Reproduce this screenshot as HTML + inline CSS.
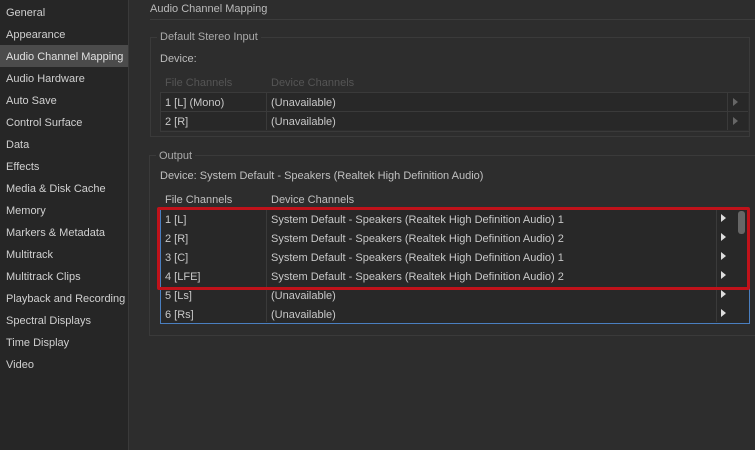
<!DOCTYPE html>
<html><head><style>
body{margin:0;width:755px;height:450px;background:#2d2d2d;font-family:"Liberation Sans",sans-serif;font-size:11px;color:#c8c8c8;position:relative;overflow:hidden}
.a{position:absolute;white-space:nowrap}
#side{position:absolute;left:0;top:0;width:129px;height:450px;background:#262626;border-right:1px solid #3a3a3a;padding-top:1px;box-sizing:border-box}
#side div{height:22px;line-height:24px;padding-left:6px;color:#d0d0d0}
#side .sel{background:#4b4b4b;color:#e0e0e0}
.row{position:absolute;height:19px;line-height:21px;border-bottom:1px solid #3a3a3a;background:#282828}
.row span{position:absolute}
.arr{position:absolute;width:0;height:0;border-left:5px solid #ddd;border-top:4px solid transparent;border-bottom:4px solid transparent}
</style></head><body>
<div id="side">
<div>General</div><div>Appearance</div><div class="sel">Audio Channel Mapping</div><div>Audio Hardware</div><div>Auto Save</div><div>Control Surface</div><div>Data</div><div>Effects</div><div>Media &amp; Disk Cache</div><div>Memory</div><div>Markers &amp; Metadata</div><div>Multitrack</div><div>Multitrack Clips</div><div>Playback and Recording</div><div>Spectral Displays</div><div>Time Display</div><div>Video</div>
</div>
<div class="a" style="left:150px;top:3px;color:#bbb">Audio Channel Mapping</div>
<div class="a" style="left:150px;top:19px;width:605px;height:1px;background:#3c3c3c"></div>
<div class="a" style="left:150px;top:37px;width:598px;height:98px;border:1px solid #3a3a3a"></div>
<div class="a" style="left:157px;top:31px;background:#2d2d2d;padding:0 3px;color:#aaa">Default Stereo Input</div>
<div class="a" style="left:160px;top:53px;color:#bbb">Device:</div>
<div class="a" style="left:165px;top:77px;color:#555">File Channels</div>
<div class="a" style="left:271px;top:77px;color:#555">Device Channels</div>
<div class="a" style="left:160px;top:92px;width:588px;height:38px;border:1px solid #3a3a3a"></div>
<div class="row" style="left:161px;top:93px;width:587px;height:18px"><span style="left:4px">1 [L] (Mono)</span><span style="left:110px">(Unavailable)</span></div>
<div class="row" style="left:161px;top:112px;width:587px;height:18px;border:0"><span style="left:4px">2 [R]</span><span style="left:110px">(Unavailable)</span></div>
<div class="a" style="left:266px;top:93px;width:1px;height:37px;background:#3a3a3a"></div>
<div class="a" style="left:727px;top:93px;width:1px;height:37px;background:#3a3a3a"></div>
<div class="arr" style="left:733px;top:98px;border-left-color:#666"></div>
<div class="arr" style="left:733px;top:117px;border-left-color:#666"></div>

<div class="a" style="left:149px;top:155px;width:606px;height:179px;border:1px solid #3a3a3a"></div>
<div class="a" style="left:156px;top:150px;background:#2d2d2d;padding:0 3px;color:#aaa">Output</div>
<div class="a" style="left:160px;top:170px;color:#c0c0c0">Device: System Default - Speakers (Realtek High Definition Audio)</div>
<div class="a" style="left:165px;top:194px;color:#c0c0c0">File Channels</div>
<div class="a" style="left:271px;top:194px;color:#c0c0c0">Device Channels</div>
<div class="a" style="left:160px;top:209px;width:588px;height:113px;border:1px solid #4a7fc0;background:#282828"></div>
<div class="row" style="left:161px;top:210px;width:576px"><span style="left:4px">1 [L]</span><span style="left:110px">System Default - Speakers (Realtek High Definition Audio) 1</span></div>
<div class="row" style="left:161px;top:229px;width:576px"><span style="left:4px">2 [R]</span><span style="left:110px">System Default - Speakers (Realtek High Definition Audio) 2</span></div>
<div class="row" style="left:161px;top:248px;width:576px"><span style="left:4px">3 [C]</span><span style="left:110px">System Default - Speakers (Realtek High Definition Audio) 1</span></div>
<div class="row" style="left:161px;top:267px;width:576px"><span style="left:4px">4 [LFE]</span><span style="left:110px">System Default - Speakers (Realtek High Definition Audio) 2</span></div>
<div class="row" style="left:161px;top:286px;width:576px"><span style="left:4px">5 [Ls]</span><span style="left:110px">(Unavailable)</span></div>
<div class="row" style="left:161px;top:305px;width:576px;border:0;height:17px"><span style="left:4px">6 [Rs]</span><span style="left:110px">(Unavailable)</span></div>
<div class="a" style="left:266px;top:210px;width:1px;height:112px;background:#3a3a3a"></div>
<div class="a" style="left:716px;top:210px;width:1px;height:112px;background:#3a3a3a"></div>
<div class="arr" style="left:721px;top:214px"></div>
<div class="arr" style="left:721px;top:233px"></div>
<div class="arr" style="left:721px;top:252px"></div>
<div class="arr" style="left:721px;top:271px"></div>
<div class="arr" style="left:721px;top:290px"></div>
<div class="arr" style="left:721px;top:309px"></div>
<div class="a" style="left:738px;top:211px;width:7px;height:23px;background:#666;border-radius:3px"></div>
<div class="a" style="left:157px;top:207px;width:587px;height:77px;border:3px solid #c0121a;border-radius:2px"></div>
</body></html>
